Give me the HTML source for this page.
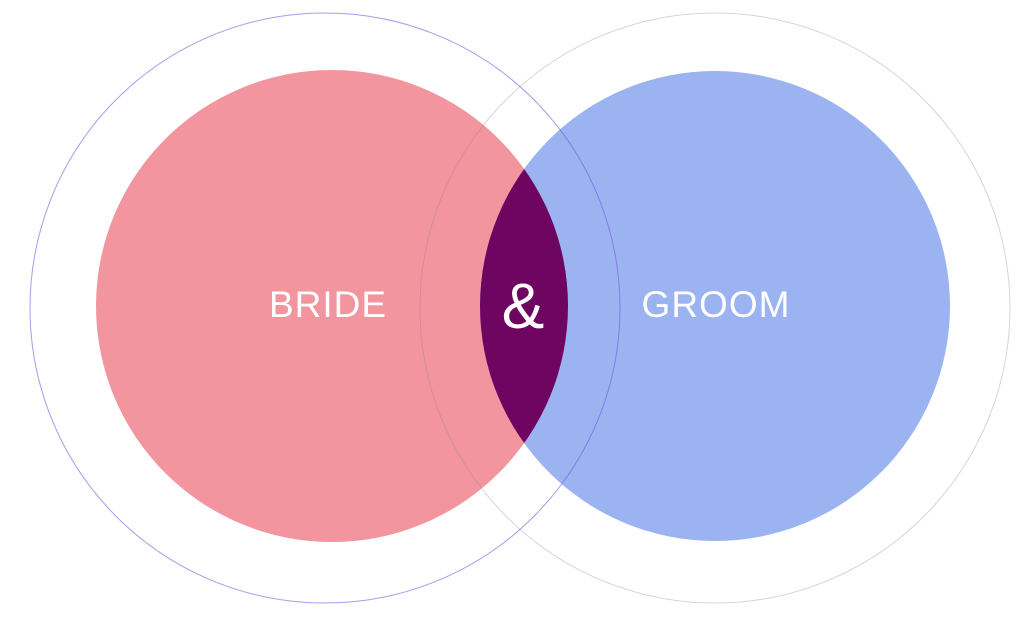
<!DOCTYPE html>
<html><head><meta charset="utf-8"><style>
html,body{margin:0;padding:0;background:#fff;width:1036px;height:618px;overflow:hidden}
svg{display:block}
text{font-family:"Liberation Sans",sans-serif;fill:#fff}
</style></head><body>
<svg width="1036" height="618" viewBox="0 0 1036 618">
<defs>
<clipPath id="pc"><circle cx="332" cy="306" r="236"/></clipPath>
</defs>
<circle cx="332" cy="306" r="236" fill="#f2959f"/>
<circle cx="715" cy="306" r="235" fill="#9cb3f2"/>
<circle cx="715" cy="306" r="235" fill="#6e0560" clip-path="url(#pc)"/>
<circle cx="325" cy="308" r="295" fill="none" stroke="#6a5ae0" stroke-opacity="0.6" stroke-width="1"/>
<circle cx="715" cy="308" r="295" fill="none" stroke="#888" stroke-opacity="0.35" stroke-width="1"/>
<text x="328" y="317" font-size="37" text-anchor="middle" font-weight="300" letter-spacing="1">BRIDE</text>
<text x="716" y="317" font-size="37" text-anchor="middle" font-weight="300" letter-spacing="1">GROOM</text>
<text x="523" y="328" font-size="64" text-anchor="middle" font-weight="300">&amp;</text>
</svg>
</body></html>
